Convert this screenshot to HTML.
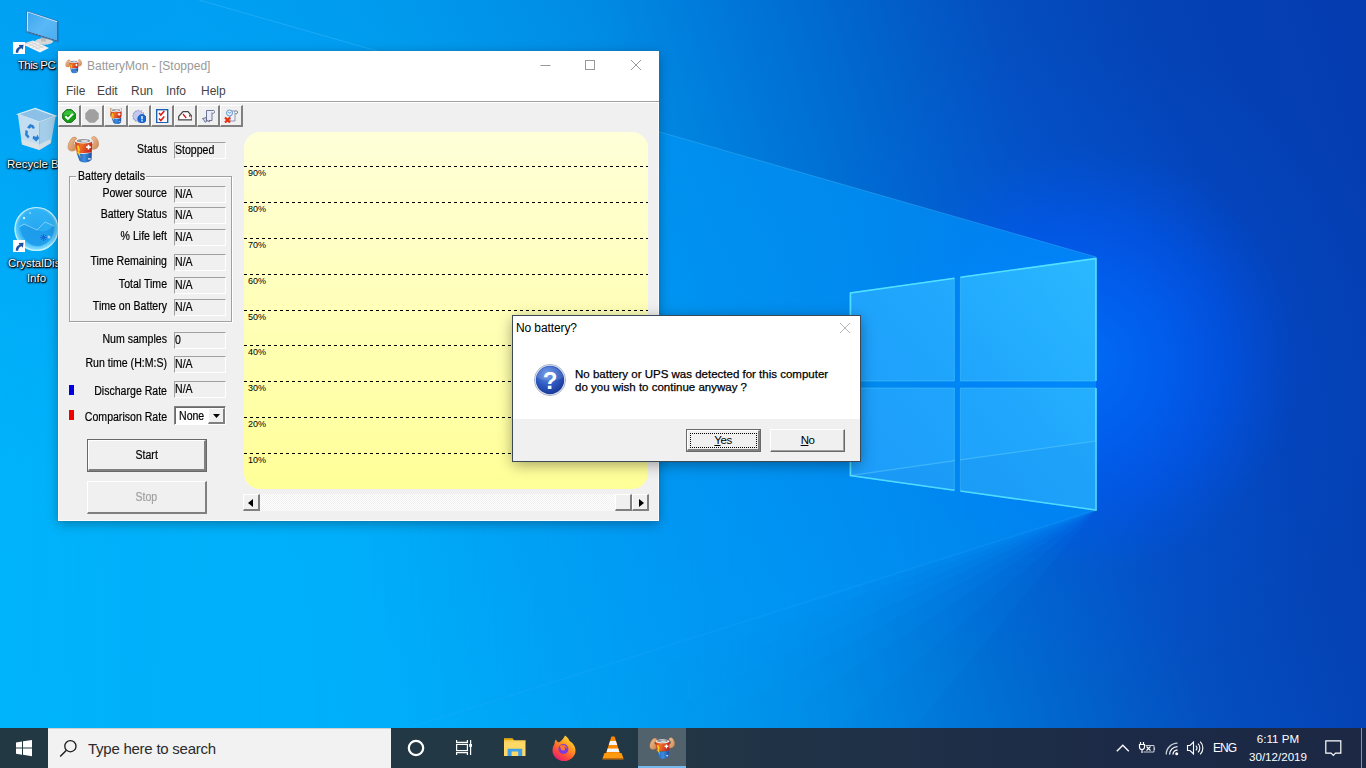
<!DOCTYPE html>
<html lang="en">
<head>
<meta charset="utf-8">
<title>BatteryMon - [Stopped]</title>
<style>
*{box-sizing:border-box;margin:0;padding:0}
html,body{width:1366px;height:768px;overflow:hidden;background:#0a6fd8}
body{position:relative;font-family:"Liberation Sans",sans-serif;font-size:11px;color:#000}
.abs{position:absolute}
#wall{position:absolute;left:0;top:0;width:1366px;height:768px}
/* desktop icons */
.dlabel{position:absolute;color:#fff;font-size:12px;white-space:nowrap;text-shadow:0 1px 2px #000,0 0 3px rgba(0,0,0,.95),1px 1px 1px #000,0 0 1px rgba(0,0,0,.8);letter-spacing:0}
/* main window */
#win{position:absolute;left:58px;top:51px;width:601px;height:470px;background:#f0f0f0;box-shadow:inset 0 0 0 1px rgba(255,255,255,.7),0 0 0 1px rgba(40,120,170,.25),0 3px 11px rgba(0,0,0,.3)}
#titlebar{position:absolute;left:0;top:0;width:601px;height:30px;background:#fff}
#title{position:absolute;left:29px;top:8px;font-size:12px;color:#999;white-space:nowrap}
#menubar{position:absolute;left:0;top:30px;width:601px;height:20px;background:#fff}
#menubar span{position:absolute;top:3px;font-size:12px;color:#444}
#menuline{position:absolute;left:0;top:50px;width:601px;height:1px;background:#a0a0a0;box-shadow:0 1px 0 #fff}
.tb{position:absolute;top:54px;width:23px;height:22px;background:#f0f0f0;border-top:1px solid #fff;border-left:1px solid #fff;border-right:2px solid #808080;border-bottom:2px solid #808080}
.lbl{position:absolute;white-space:nowrap;font-size:12px;line-height:12px;text-align:right;width:110px;transform:scaleX(.88);transform-origin:100% 50%;-webkit-text-stroke:0.2px #000}
.ms{display:inline-block;transform:scaleX(.88);transform-origin:0 50%;white-space:nowrap;-webkit-text-stroke:0.2px currentColor}
.fld{position:absolute;left:116px;width:52px;height:17px;background:#f0f0f0;border-top:1px solid #a0a0a0;border-left:1px solid #a0a0a0;border-right:1px solid #fff;border-bottom:1px solid #fff;font-size:12px;line-height:12px;padding-left:0;padding-top:1px;white-space:nowrap}
.btn{position:absolute;left:29px;width:120px;height:33px;background:#f0f0f0;border-top:1px solid #fff;border-left:1px solid #fff;border-right:2px solid #808080;border-bottom:2px solid #808080;box-shadow:0 0 0 1px #696969;text-align:center;line-height:30px;font-size:12px}
.sb{width:17px;height:17px;background:#f0f0f0;border-top:1px solid #fff;border-left:1px solid #fff;border-right:2px solid #808080;border-bottom:2px solid #808080}
/* dialog */
#dlg{position:absolute;left:513px;top:316px;width:347px;height:145px;background:#fff;box-shadow:0 0 0 1px #3c4a58,0 3px 14px rgba(0,0,0,.4)}
#dlgfoot{position:absolute;left:0;top:103px;width:347px;height:42px;background:#f0f0f0}
.dbtn{position:absolute;top:114px;width:73px;height:21px;background:#f0f0f0;border-top:1px solid #fff;border-left:1px solid #fff;border-right:2px solid #808080;border-bottom:2px solid #808080;box-shadow:0 0 0 1px #9a9a9a;text-align:center;font-size:11.500px;letter-spacing:-0.500px;line-height:18px;text-underline-offset:1px}
/* taskbar */
#taskbar{position:absolute;left:0;top:728px;width:1366px;height:40px;background:linear-gradient(90deg,#223843 0%,#223845 45%,#1f3047 65%,#1c2a47 82%,#1c2844 100%)}
#search{position:absolute;left:48px;top:0;width:343px;height:40px;background:#f2f2f2;border-top:1px solid #cfcfcf}
#search span{position:absolute;left:40px;top:11px;font-size:15px;letter-spacing:-0.25px;color:#2b2b2b;white-space:nowrap}
.tray{position:absolute;color:#fff;font-size:12px;white-space:nowrap}
</style>
</head>
<body>
<svg id="wall" viewBox="0 0 1366 768">
<defs>
<linearGradient id="bg" gradientUnits="userSpaceOnUse" x1="0" y1="768" x2="1464" y2="325">
<stop offset="0" stop-color="#00b5fb"/>
<stop offset="0.26" stop-color="#00b2fa"/>
<stop offset="0.388" stop-color="#00a2f0"/>
<stop offset="0.513" stop-color="#008ce5"/>
<stop offset="0.639" stop-color="#006ed3"/>
<stop offset="0.764" stop-color="#044fc1"/>
<stop offset="0.868" stop-color="#0442b5"/>
<stop offset="1" stop-color="#053cb0"/>
</linearGradient>
<radialGradient id="topdark" gradientUnits="userSpaceOnUse" cx="100" cy="-50" r="520">
<stop offset="0" stop-color="#0050d0" stop-opacity="0.23"/>
<stop offset="0.5" stop-color="#0050d0" stop-opacity="0.11"/>
<stop offset="1" stop-color="#0050d0" stop-opacity="0"/>
</radialGradient>
<linearGradient id="wedge" gradientUnits="userSpaceOnUse" x1="0" y1="0" x2="1100" y2="0">
<stop offset="0" stop-color="#009cff" stop-opacity="0.04"/>
<stop offset="0.36" stop-color="#009cff" stop-opacity="0.15"/>
<stop offset="0.5" stop-color="#009cff" stop-opacity="0.32"/>
<stop offset="0.61" stop-color="#009cff" stop-opacity="0.45"/>
<stop offset="0.76" stop-color="#009cff" stop-opacity="0.6"/>
<stop offset="1" stop-color="#009cff" stop-opacity="0.62"/>
</linearGradient>
<radialGradient id="glow" gradientUnits="userSpaceOnUse" cx="1085" cy="360" r="330">
<stop offset="0" stop-color="#0070ff" stop-opacity="0.85"/>
<stop offset="0.25" stop-color="#0064ff" stop-opacity="0.7"/>
<stop offset="0.42" stop-color="#005cff" stop-opacity="0.5"/>
<stop offset="0.65" stop-color="#0058f8" stop-opacity="0.1"/>
<stop offset="1" stop-color="#0058f8" stop-opacity="0"/>
</radialGradient>
<linearGradient id="pane" gradientUnits="userSpaceOnUse" x1="850" y1="480" x2="1096" y2="270">
<stop offset="0" stop-color="#1c9cf9"/>
<stop offset="0.5" stop-color="#20a6fd"/>
<stop offset="1" stop-color="#2ab8ff"/>
</linearGradient>
</defs>
<rect width="1366" height="768" fill="url(#bg)"/>
<rect width="700" height="500" fill="url(#topdark)"/>
<circle cx="1085" cy="360" r="330" fill="url(#glow)"/>
<mask id="lm" maskUnits="userSpaceOnUse" x="0" y="0" width="1366" height="768">
<polygon points="0,385 1096,385 1096,510 880,768 0,768" fill="#fff" fill-opacity="0.1250"/>
<polygon points="0,385 1096,385 1096,510 790,768 0,768" fill="#fff" fill-opacity="0.1429"/>
<polygon points="0,385 1096,385 1096,510 700,768 0,768" fill="#fff" fill-opacity="0.1667"/>
<polygon points="0,385 1096,385 1096,510 620,768 0,768" fill="#fff" fill-opacity="0.2000"/>
<polygon points="0,385 1096,385 1096,510 540,768 0,768" fill="#fff" fill-opacity="0.2500"/>
<polygon points="0,385 1096,385 1096,510 460,768 0,768" fill="#fff" fill-opacity="0.3333"/>
<polygon points="0,385 1096,385 1096,510 380,768 0,768" fill="#fff" fill-opacity="0.5000"/>
<polygon points="0,385 1096,385 1096,510 300,768 0,768" fill="#fff" fill-opacity="1.0000"/>
</mask>
<polygon points="1096,257 199,0 0,0 0,385 1096,385" fill="url(#wedge)"/>
<rect x="0" y="385" width="1096" height="383" fill="url(#wedge)" mask="url(#lm)"/>
<line x1="1096" y1="510" x2="282" y2="768" stroke="#40b8ff" stroke-opacity="0.12" stroke-width="1.5"/>
<line x1="1096" y1="257" x2="199" y2="0" stroke="#4cc4ff" stroke-opacity="0.35" stroke-width="1"/>
<!-- logo -->
<g stroke="#6adcff" stroke-opacity="0.45" stroke-width="0.8">
<polygon points="850,293 954.400,278.200 954.400,381 850,381" fill="url(#pane)"/>
<polygon points="960.400,277.300 1096,258.500 1096,381 960.400,381" fill="url(#pane)"/>
<polygon points="850,388 954.400,388 954.400,490.300 850,475.600" fill="url(#pane)"/>
<polygon points="960.400,388 1096,388 1096,510 960.400,491" fill="url(#pane)"/>
</g>
<path d="M850.500,381V293L954.400,278.200M960.400,277.300L1096,258.500V381M1096,388V510L960.400,491M954.400,490.300L850.500,475.600V388" fill="none" stroke="#58e6ff" stroke-opacity="0.9" stroke-width="1.600"/>
<polygon points="850,475.600 955,460.700 955,490.400" fill="#0060d0" fill-opacity="0.080"/>
<polygon points="960,459.800 1096,441 1096,510 960,491" fill="#0060d0" fill-opacity="0.080"/>
<path d="M850,475.600L955,460.700M960,459.800L1096,441" stroke="#7fe0ff" stroke-opacity="0.350" stroke-width="1.200" fill="none"/>
</svg>

<svg width="0" height="0" style="position:absolute"><defs>
<linearGradient id="bmr" x1="0" y1="0" x2="1" y2="0.3"><stop offset="0" stop-color="#c8321a"/><stop offset="0.45" stop-color="#f0702a"/><stop offset="1" stop-color="#c42a1c"/></linearGradient>
<linearGradient id="bmb" x1="0" y1="0" x2="1" y2="0"><stop offset="0" stop-color="#1f5fb0"/><stop offset="0.5" stop-color="#3d8be0"/><stop offset="1" stop-color="#1a4f9c"/></linearGradient>
<linearGradient id="bms" x1="0" y1="0" x2="1" y2="1"><stop offset="0" stop-color="#f3c39a"/><stop offset="1" stop-color="#c98550"/></linearGradient>
<symbol id="bm" viewBox="0 0 32 32">
<path d="M8.500 18C5 20 1.200 19 1 15.500C.800 12 2.500 9 4.500 6.500C5.500 5 8.500 4.500 9.500 6C10 7.500 8 8.500 7 10.500C6.500 12 7.500 13 9 13.500z" fill="url(#bms)" stroke="#b9763f" stroke-width="0.500"/>
<path d="M24.500 17C27.500 18 31 16.500 31.500 13C32 10 30.500 7 28.500 5C27.500 4 25 4.500 24.500 6C24.500 7.500 26.500 8 27 10C27 11.500 26 12.500 24.500 12.500z" fill="url(#bms)" stroke="#b9763f" stroke-width="0.500"/>
<path d="M7.800 9.500C8 7 25.200 6.500 25.200 9.200L24.800 20.500L9.800 21.500z" fill="url(#bmr)"/>
<path d="M9.800 21.300C14 22.500 21 22 24.800 20.300L24.600 27.500C22.500 31 14.500 31.500 12.300 28.500z" fill="url(#bmb)"/>
<ellipse cx="16.500" cy="9" rx="8.700" ry="2.500" fill="#f4f4f4"/><ellipse cx="16.500" cy="8.700" rx="6.800" ry="1.700" fill="#8c9296"/><ellipse cx="17.500" cy="8.900" rx="3.500" ry="1" fill="#d8dcde"/>
<path d="M19.200 14.300h1.500v-1.500h1.600v1.500h1.500v1.600h-1.500v1.500h-1.600v-1.500h-1.500z" fill="#fff"/>
<rect x="21" y="26.300" width="2.800" height="1.100" rx=".5" fill="#fff"/>
<path d="M9.800 13.500l2 .3l1.300 5l-1.200-.2l1.800 7.500l-3.600-6.300l1.300.2z" fill="#ffd21e"/>
</symbol></defs></svg>
<!-- desktop icons -->
<svg width="0" height="0" style="position:absolute"><defs><symbol id="sc" viewBox="0 0 12 12"><rect x="0" y="0" width="12" height="12" fill="#fff"/><path d="M2.800 10.800C2.500 7.300 4.300 5.300 6.600 4.700L5.700 2.900L10.600 2.800L9.800 7.700L8.500 6.300C6.700 6.700 5.300 8.300 5.200 10.800z" fill="#1f4fa0"/></symbol></defs></svg>
<svg class="abs" style="left:10px;top:6px" width="54" height="52" viewBox="0 0 54 52">
<defs><linearGradient id="scr" x1="0" y1="0" x2="1" y2="1"><stop offset="0" stop-color="#3ca4ee"/><stop offset="0.5" stop-color="#5ab8f6"/><stop offset="1" stop-color="#48aef2"/></linearGradient></defs>
<ellipse cx="34" cy="35.500" rx="9" ry="3.300" fill="#d4d6d8"/><path d="M31 31l5 1.500v3h-5z" fill="#b8babc"/>
<path d="M17.500 5.700L47.400 15.700V35L17.200 25.600z" fill="url(#scr)" stroke="#e8f4fc" stroke-width="1"/><path d="M47.400 15.700V35L17.200 25.600" fill="none" stroke="#274a7a" stroke-width="0.900"/><path d="M16.700 4.900L48.200 15.200V36L16.400 26.200z" fill="none" stroke="#2a5a94" stroke-opacity="0.700" stroke-width="0.700"/>
<path d="M12 38l11-3.500L39 42l-9 4.500z" fill="#f2f2f2"/><path d="M15 38.200l8.500-2.800M18.500 39.800l8.500-3M22 41.500l9-3.200M25.500 43.200l9-3.500M17 36.800l13 6.500M20.500 35.800l13 6.300" stroke="#c4c6c8" stroke-width="0.600" fill="none"/>
</svg>
<svg class="abs" style="left:13px;top:42px" width="12" height="12"><use href="#sc"/></svg>
<div class="dlabel" style="left:0;top:59px;width:73px;text-align:center;font-size:11.500px;letter-spacing:-0.500px">This PC</div>
<svg class="abs" style="left:14px;top:106px" width="46" height="48" viewBox="0 0 46 48">
<path d="M3.800 8.300L21.200 2.500L41.700 10.100L25.300 16z" fill="#8cc0e6"/><path d="M3.800 8.300L21.200 2.500L41.700 10.100L25.300 16z" fill="none" stroke="#d8ecf8" stroke-width="1.200"/>
<path d="M3.800 8.300L25.300 16L25.500 44L8 38.500z" fill="#c3def0"/><path d="M25.300 16L41.700 10.100L37 37L25.500 44z" fill="#a3cde9"/>
<path d="M8 38.500L25.500 44L37 37L36.400 33L25.400 38.500L7.300 33z" fill="#dfe4e6" fill-opacity="0.800"/>
<g fill="#2b80d6"><path d="M13 21.500l3-3.500l3.500 1.200l1.500 3l-2.500.6l-1-1.800l-2 1.800z"/><path d="M11.500 24l2.500 1l-.5 3l2 2.500l-1.500 2l-3-3.500z"/><path d="M18.500 32.500l.8-2.800l3 1.300l1-2.500l2 3.800l-3 3.200z"/></g>
</svg>
<div class="dlabel" style="left:7px;top:158px;font-size:11.500px">Recycle Bin</div>
<svg class="abs" style="left:13px;top:205px" width="48" height="48" viewBox="0 0 48 48">
<defs><radialGradient id="cb" cx="0.5" cy="0.45" r="0.55"><stop offset="0" stop-color="#27a9f2"/><stop offset="0.7" stop-color="#2fb2f6"/><stop offset="0.92" stop-color="#7fdcff"/><stop offset="1" stop-color="#d6f6ff"/></radialGradient></defs>
<circle cx="23.500" cy="24" r="22" fill="url(#cb)"/><circle cx="23.500" cy="24" r="21.500" fill="none" stroke="#c8f2ff" stroke-width="1.200" stroke-opacity="0.900"/>
<path d="M7 22c6-4 12 0 17 3s12 1 17-5c1 9-4 18-13 21c-10 2-19-6-21-19z" fill="#1593e6" fill-opacity="0.650"/>
<path d="M6 22l5-3l13 6l8-8l9 4" fill="none" stroke="#bfeaff" stroke-width="0.800" stroke-opacity="0.700"/>
<path d="M28 30l5 5m0-5l-5 5m2.500-6v7m-3.500-3.500h7" stroke="#1a66d8" stroke-width="1" fill="none"/>
<circle cx="11" cy="13" r="1.200" fill="#fff" fill-opacity="0.800"/><circle cx="17" cy="8" r="0.800" fill="#fff" fill-opacity="0.800"/><circle cx="36" cy="32" r="1.500" fill="#d8f4ff" fill-opacity="0.700"/>
</svg>
<svg class="abs" style="left:13px;top:240px" width="12" height="12"><use href="#sc"/></svg>
<div class="dlabel" style="left:8px;top:257px;font-size:11.500px">CrystalDisk</div>
<div class="dlabel" style="left:0;top:272px;width:73px;text-align:center;font-size:11.500px">Info</div>
<!-- main window -->
<div id="win">
<div id="titlebar"><svg class="abs" style="left:7px;top:6px" width="17" height="17"><use href="#bm"/></svg><div id="title">BatteryMon - [Stopped]</div></div>
<div id="menubar"><span style="left:8px">File</span><span style="left:39px">Edit</span><span style="left:73px">Run</span><span style="left:108px">Info</span><span style="left:143px">Help</span></div>
<div id="menuline"></div>
<svg class="abs" style="left:9px;top:81px" width="32" height="32"><use href="#bm"/></svg>
<svg class="abs" style="left:470px;top:0" width="131" height="30" viewBox="0 0 131 30">
<path d="M12.5 14.500h10" stroke="#999" stroke-width="1" fill="none"/>
<rect x="57.5" y="9.5" width="9" height="9" stroke="#999" stroke-width="1" fill="none"/>
<path d="M103 9l10 10M113 9l-10 10" stroke="#999" stroke-width="1" fill="none"/>
</svg>
<div class="tb" style="left:0px;width:23px"><svg class="abs" style="left:3px;top:3px" width="14" height="14" viewBox="0 0 14 14"><path d="M4.500 .700h5l3.800 3.800v5l-3.800 3.800h-5L.700 9.500v-5z" fill="#14a014" stroke="#0a6410" stroke-width="1"/><path d="M4.500 1.500h5l3 3v1.500h-11v-1.500z" fill="#4fd04f" fill-opacity="0.600"/><path d="M3.300 7.300l2.600 2.600l4.900-5" fill="none" stroke="#fff" stroke-width="2"/></svg></div>
<div class="tb" style="left:23px;width:23px"><svg class="abs" style="left:3px;top:3px" width="14" height="14" viewBox="0 0 14 14"><path d="M4.300 .300h5.400l4 4v5.400l-4 4H4.300l-4-4V4.300z" fill="#a0a0a0"/></svg></div>
<div class="tb" style="left:46px;width:24px"><svg class="abs" style="left:5px;top:2px" width="12" height="17" viewBox="7.600 5 17.800 27"><use href="#bm" x="0" y="0" width="32" height="32"/></svg></div>
<div class="tb" style="left:70px;width:23px"><svg class="abs" style="left:3px;top:3px" width="14" height="14" viewBox="0 0 14 14"><path d="M6.500 .800l1.200 1.600l1.900-.700l.300 2l2 .300l-.700 1.900l1.600 1.200l-1.600 1.200l.700 1.900l-2 .300l-.300 2l-1.900-.700l-1.200 1.600l-1.200-1.600l-1.900.700l-.300-2l-2-.300l.700-1.900L.200 7.100l1.600-1.200l-.700-1.900l2-.300l.300-2l1.900.700z" fill="#c4c8ee" stroke="#5a64a0" stroke-width="0.700" stroke-dasharray="1 0.800"/><circle cx="10" cy="9.800" r="4.300" fill="#1668d4"/><circle cx="10" cy="9.800" r="4.300" fill="none" stroke="#0c4aa8" stroke-width="0.600"/><rect x="9.300" y="7" width="1.400" height="3.400" fill="#fff"/><rect x="9.300" y="11.200" width="1.400" height="1.300" fill="#fff"/></svg></div>
<div class="tb" style="left:93px;width:23px"><svg class="abs" style="left:3px;top:3px" width="14" height="14" viewBox="0 0 14 14"><rect x="1.700" y=".700" width="11" height="13" fill="#fff" stroke="#1c60b4" stroke-width="1.400"/><path d="M4 4l1.800 2l3.500-4M4 9.500l1.800 2l3.500-4" fill="none" stroke="#d81818" stroke-width="1.500"/></svg></div>
<div class="tb" style="left:116px;width:23px"><svg class="abs" style="left:3px;top:3px" width="14" height="14" viewBox="0 0 14 14"><path d="M.700 10.800V7.500L5 2.700h5l4 4.800v3.300z" fill="#fff" stroke="#444" stroke-width="1.200"/><path d="M8.200 9L5 5" stroke="#d01818" stroke-width="1.300"/><path d="M11.300 6l.900 2.300" stroke="#d01818" stroke-width="1"/></svg></div>
<div class="tb" style="left:139px;width:23px"><svg class="abs" style="left:3px;top:3px" width="14" height="14" viewBox="0 0 14 14"><path d="M5.500 1.500h5.500c1.500 0 1.500 2 0 2v8h-5.500z" fill="#e8eaf8" stroke="#50587a" stroke-width="0.800"/><path d="M1.500 9.500l4-1v3.500c0 1.500-2 1.500-2 0z" fill="#d4d8f0" stroke="#50587a" stroke-width="0.800"/><path d="M11 1.500c2-.500 3 .500 2.500 2c-.500 1-1.500.800-2.500.500" fill="#f4f4fc" stroke="#50587a" stroke-width="0.800"/><path d="M5.500 11.500l3 1.500v-2" fill="#c0c4e0" stroke="#50587a" stroke-width="0.600"/></svg></div>
<div class="tb" style="left:162px;width:23px"><svg class="abs" style="left:3px;top:3px" width="14" height="14" viewBox="0 0 14 14"><path d="M6 2h5v10h-5z" fill="#eef0fa" stroke="#6a7090" stroke-width="0.700"/><circle cx="5.500" cy="4" r="3" fill="#dff0fc" stroke="#5a90c8" stroke-width="0.900"/><path d="M4.500 3l1 1.300l1.200-1.300" fill="none" stroke="#3a70b0" stroke-width="0.700"/><path d="M11 2c2-.500 3 .500 2.500 2c-.500 1-1.500.800-2.500.500" fill="#f4f4fc" stroke="#50587a" stroke-width="0.800"/><path d="M1 8.500l5 5M6 8.500l-5 5" stroke="#e83010" stroke-width="2.200"/></svg></div>
<div class="abs" style="left:11px;top:125px;width:163px;height:146px;border:1px solid #a0a0a0;box-shadow:1px 1px 0 #fff, inset 1px 1px 0 #fff"></div>
<div class="abs" style="left:18px;top:117px;width:70px;height:14px;background:#f0f0f0"></div><div class="abs ms" style="left:20px;top:119px;font-size:12px;line-height:12px">Battery details</div>
<div class="lbl" style="left:-1px;top:92px">Status</div><div class="fld" style="top:91px"><span class="ms">Stopped</span></div>
<div class="lbl" style="left:-1px;top:136px">Power source</div><div class="fld" style="top:135px"><span class="ms">N/A</span></div>
<div class="lbl" style="left:-1px;top:157px">Battery Status</div><div class="fld" style="top:156px"><span class="ms">N/A</span></div>
<div class="lbl" style="left:-1px;top:179px">% Life left</div><div class="fld" style="top:178px"><span class="ms">N/A</span></div>
<div class="lbl" style="left:-1px;top:204px">Time Remaining</div><div class="fld" style="top:203px"><span class="ms">N/A</span></div>
<div class="lbl" style="left:-1px;top:227px">Total Time</div><div class="fld" style="top:226px"><span class="ms">N/A</span></div>
<div class="lbl" style="left:-1px;top:249px">Time on Battery</div><div class="fld" style="top:248px"><span class="ms">N/A</span></div>
<div class="lbl" style="left:-1px;top:282px">Num samples</div><div class="fld" style="top:281px"><span class="ms">0</span></div>
<div class="lbl" style="left:-1px;top:306px">Run time (H:M:S)</div><div class="fld" style="top:305px"><span class="ms">N/A</span></div>
<div class="lbl" style="left:-1px;top:334px">Discharge Rate</div><div class="fld" style="top:330px"><span class="ms">N/A</span></div>
<div class="lbl" style="left:-1px;top:360px">Comparison Rate</div>
<div class="abs" style="left:116px;top:355px;width:52px;height:19px;background:#fff;border-top:1px solid #828282;border-left:1px solid #828282;border-right:1px solid #fff;border-bottom:1px solid #fff;box-shadow:inset 1px 1px 0 #6a6a6a;font-size:12px;line-height:18px;padding-left:4px"><span class="ms">None</span>
<div class="abs" style="left:33px;top:1px;width:17px;height:16px;background:#f0f0f0;border-top:1px solid #fff;border-left:1px solid #fff;border-right:2px solid #808080;border-bottom:2px solid #808080"><svg class="abs" style="left:4px;top:5px" width="7" height="4"><path d="M0 0h7l-3.500 4z" fill="#000"/></svg></div></div>
<div class="abs" style="left:11px;top:334px;width:5px;height:10px;background:#0000e0"></div>
<div class="abs" style="left:11px;top:359px;width:5px;height:10px;background:#f00000"></div>
<div class="btn" style="top:389px;left:30px;width:118px;height:31px;line-height:28px"><span class="ms" style="transform-origin:50% 50%">Start</span></div>
<div class="btn" style="top:430px;color:#a0a0a0;box-shadow:none"><span class="ms" style="transform-origin:50% 50%">Stop</span></div>
<svg class="abs" style="left:186px;top:81px" width="404" height="357" viewBox="0 0 404 357"><defs><linearGradient id="yg" x1="0" y1="0" x2="0" y2="1"><stop offset="0" stop-color="#ffffd9"/><stop offset="1" stop-color="#ffff98"/></linearGradient></defs><rect x="0" y="0" width="404" height="357" rx="16" ry="16" fill="url(#yg)"/><line x1="0" y1="34.5" x2="404" y2="34.5" stroke="#000" stroke-width="1" stroke-dasharray="3 3"/><text x="4" y="44" font-family="Liberation Sans, sans-serif" font-size="9" fill="#000">90%</text><line x1="0" y1="70.5" x2="404" y2="70.5" stroke="#000" stroke-width="1" stroke-dasharray="3 3"/><text x="4" y="80" font-family="Liberation Sans, sans-serif" font-size="9" fill="#000">80%</text><line x1="0" y1="106.5" x2="404" y2="106.5" stroke="#000" stroke-width="1" stroke-dasharray="3 3"/><text x="4" y="116" font-family="Liberation Sans, sans-serif" font-size="9" fill="#000">70%</text><line x1="0" y1="142.5" x2="404" y2="142.5" stroke="#000" stroke-width="1" stroke-dasharray="3 3"/><text x="4" y="152" font-family="Liberation Sans, sans-serif" font-size="9" fill="#000">60%</text><line x1="0" y1="178.5" x2="404" y2="178.5" stroke="#000" stroke-width="1" stroke-dasharray="3 3"/><text x="4" y="188" font-family="Liberation Sans, sans-serif" font-size="9" fill="#000">50%</text><line x1="0" y1="213.5" x2="404" y2="213.5" stroke="#000" stroke-width="1" stroke-dasharray="3 3"/><text x="4" y="223" font-family="Liberation Sans, sans-serif" font-size="9" fill="#000">40%</text><line x1="0" y1="249.5" x2="404" y2="249.5" stroke="#000" stroke-width="1" stroke-dasharray="3 3"/><text x="4" y="259" font-family="Liberation Sans, sans-serif" font-size="9" fill="#000">30%</text><line x1="0" y1="285.5" x2="404" y2="285.5" stroke="#000" stroke-width="1" stroke-dasharray="3 3"/><text x="4" y="295" font-family="Liberation Sans, sans-serif" font-size="9" fill="#000">20%</text><line x1="0" y1="321.5" x2="404" y2="321.5" stroke="#000" stroke-width="1" stroke-dasharray="3 3"/><text x="4" y="331" font-family="Liberation Sans, sans-serif" font-size="9" fill="#000">10%</text></svg>
<div class="abs" style="left:186px;top:443px;width:405px;height:17px;background:#f8f8f8;background-image:conic-gradient(#fff 25%,#f0f0f0 0 50%,#fff 0 75%,#f0f0f0 0);background-size:2px 2px"></div>
<div class="sb abs" style="left:185px;top:443px"><svg class="abs" style="left:4px;top:4px" width="5" height="8"><path d="M5 0v8l-5-4z"/></svg></div>
<div class="sb abs" style="left:557px;top:443px"></div>
<div class="sb abs" style="left:574px;top:443px"><svg class="abs" style="left:6px;top:4px" width="5" height="8"><path d="M0 0v8l5-4z"/></svg></div>
</div>

<!-- dialog -->
<div id="dlg">
<div class="abs" style="left:3px;top:5px;font-size:12px;letter-spacing:-0.1px;white-space:nowrap">No battery?</div>
<svg class="abs" style="left:326px;top:6px" width="12" height="12" viewBox="0 0 12 12"><path d="M1 1l10 10M11 1L1 11" stroke="#b8b8b8" stroke-width="1" fill="none"/></svg>
<svg class="abs" style="left:20px;top:47px" width="34" height="34" viewBox="0 0 34 34">
<defs><radialGradient id="qg" cx="0.4" cy="0.3" r="0.8"><stop offset="0" stop-color="#5f8fe6"/><stop offset="0.55" stop-color="#2a55bd"/><stop offset="1" stop-color="#16318c"/></radialGradient></defs>
<circle cx="17" cy="17" r="15.6" fill="#e8ecf4" stroke="#9aa6bc" stroke-width="0.8"/>
<circle cx="17" cy="17" r="14.2" fill="url(#qg)"/>
<path d="M3.5 14a14 14 0 0 1 27 0c-6 5-20 5-27 0z" fill="#fff" fill-opacity="0.13"/>
<text x="17" y="25.5" text-anchor="middle" font-family="Liberation Sans, sans-serif" font-weight="bold" font-size="24" fill="#fff">?</text>
</svg>
<div class="abs" style="left:62px;top:52px;font-size:11.5px;line-height:13px;white-space:nowrap;-webkit-text-stroke:0.25px #000">No battery or UPS was detected for this computer<br>do you wish to continue anyway ?</div>
<div id="dlgfoot"></div>
<div class="dbtn" style="left:174px;box-shadow:0 0 0 1px #6a6a6a"><u>Y</u>es<div class="abs" style="left:2px;top:2px;width:67px;height:15px;border:1px dotted #000"></div></div>
<div class="dbtn" style="left:257px;top:113px;width:75px;height:23px;line-height:20px;box-shadow:none;border-right:1px solid #696969;border-bottom:1px solid #696969"><div class="abs" style="left:0;top:0;width:73px;height:21px;border-right:1px solid #a0a0a0;border-bottom:1px solid #a0a0a0"></div><u>N</u>o</div>
</div>

<!-- taskbar -->
<div id="taskbar">
<svg class="abs" style="left:15px;top:11px" width="18" height="18" viewBox="0 0 18 18"><path d="M1 3.4L7 2.5V8.6H1zM8 2.35L17 1V8.6H8zM1 9.6H7V15.7L1 14.8zM8 9.6H17V17.2L8 15.85z" fill="#fff"/></svg>
<div id="search"><svg class="abs" style="left:10px;top:9px" width="22" height="22" viewBox="0 0 22 22"><circle cx="12.4" cy="8.2" r="5.6" fill="none" stroke="#1a1a1a" stroke-width="1.3"/><path d="M8.4 12.3L2.2 18.6" stroke="#1a1a1a" stroke-width="1.4" fill="none"/></svg><span>Type here to search</span></div>
<!-- cortana -->
<svg class="abs" style="left:406px;top:10px" width="20" height="20" viewBox="0 0 20 20"><circle cx="10" cy="10" r="7.2" fill="none" stroke="#fff" stroke-width="2.2"/></svg>
<!-- task view -->
<svg class="abs" style="left:454px;top:10px" width="20" height="20" viewBox="0 0 20 20" fill="none" stroke="#fff" stroke-width="1.2">
<path d="M2.6 2v2.4h10.8V2M2.6 17v-2.4h10.8V17"/><rect x="2.6" y="6.4" width="10.8" height="6.2"/><path d="M16.6 2v15"/><rect x="15.2" y="6" width="2.8" height="2.8" fill="#fff" stroke="none"/></svg>
<!-- explorer -->
<svg class="abs" style="left:503px;top:9px" width="24" height="20" viewBox="0 0 24 20">
<path d="M1 1.5h8.5l1.5 2H22.5V19H1z" fill="#ffd866"/><path d="M1 1.5h8.5l1.3 1.8H1z" fill="#e9a800"/>
<path d="M4.6 19v-7.2h14.6V19h-4v-4.4H8.6V19z" fill="#3f9fe8"/><rect x="1" y="3.5" width="21.5" height="1" fill="#f5c84a"/></svg>
<!-- firefox -->
<svg class="abs" style="left:551px;top:7px" width="26" height="26" viewBox="0 0 26 26">
<defs><linearGradient id="ffg" x1="0.8" y1="0.05" x2="0.2" y2="1"><stop offset="0" stop-color="#ffe23a"/><stop offset="0.35" stop-color="#ff9a1f"/><stop offset="0.7" stop-color="#ff4a3a"/><stop offset="1" stop-color="#e3187f"/></linearGradient></defs>
<path d="M14 0.5c3 2 4 4 4.5 5.5c3 1.5 6 5 6 9.5a11.5 10.5 0 0 1-23 0c0-3 1-5 2-6.5c0-2 .5-3.500 1.500-4.500c.5 1.500 1.500 2.500 3 3c1-1 3.500-2 6-7z" fill="url(#ffg)"/>
<circle cx="12.400" cy="14" r="5" fill="#7a3be0"/><path d="M9 10.500c3-1.500 7 0 7.500 3.500c-1-1.500-2.500-2-3.500-1.500c1.500.5 1.500 2.500 0 3c-2 .5-4-1-4-5z" fill="#ff7a2a"/></svg>
<!-- vlc -->
<svg class="abs" style="left:601px;top:7px" width="24" height="26" viewBox="0 0 24 26">
<path d="M10.400 1.500h3.200l5.400 17H5z" fill="#ff8a00"/><path d="M9.100 6h5.800l1.300 4H7.800zM6.700 13.500h10.600l1.100 3.500H5.600z" fill="#f4f4f4"/>
<path d="M3.500 18h17l2 5.500H1.500z" fill="#ff9a10"/><path d="M1.500 23.500h21v1h-21z" fill="#e07000"/></svg>
<!-- batterymon active -->
<svg class="abs" style="left:649px;top:6px;z-index:2" width="26" height="26"><use href="#bm"/></svg>
<div class="abs" style="left:638px;top:0;width:48px;height:40px;background:#52626c"></div>
<div class="abs" style="left:638px;top:38px;width:48px;height:2px;background:#76b9ed"></div>
<!-- tray -->
<svg class="abs" style="left:1115px;top:15px" width="16" height="10" viewBox="0 0 16 10"><path d="M1.800 8.200L7.800 2.200L13.800 8.200" fill="none" stroke="#fff" stroke-width="1.300"/></svg>
<svg class="abs" style="left:1138px;top:13px" width="18" height="14" viewBox="0 0 18 14" fill="none" stroke="#fff" stroke-width="1">
<path d="M2.500 1v2.500M5.500 1v2.500M1.500 3.500h5v2.500a2.500 2.500 0 0 1-5 0zM4 8.500v3.500" stroke-width="1.200"/><path d="M7.500 4.500h8.500v6.500H5.500" stroke="#c8ccd4"/><path d="M16.500 6.500v2.500" stroke="#c8ccd4"/><path d="M8.500 5.500l4 4M12.500 5.500l-4 4" stroke-width="1.100"/></svg>
<svg class="abs" style="left:1165px;top:14px" width="15" height="15" viewBox="0 0 15 15" fill="none" stroke="#fff" stroke-width="1.300">
<path d="M1.200 12.500A11.300 11.300 0 0 1 12.500 1.200" stroke="#cdd2da"/><path d="M4.600 12.500A7.900 7.900 0 0 1 12.500 4.600"/><path d="M8 12.500A4.500 4.500 0 0 1 12.500 8"/><circle cx="11.700" cy="11.800" r="1.500" fill="#fff" stroke="none"/></svg>
<svg class="abs" style="left:1186px;top:12px" width="18" height="16" viewBox="0 0 18 16" fill="none" stroke="#fff" stroke-width="1.100">
<path d="M1.500 5.500h2.500l3.500-3.500v12l-3.500-3.500h-2.500z"/><path d="M9.800 5.600a3.400 3.400 0 0 1 0 4.800M12 3.600a6.200 6.200 0 0 1 0 8.800M14.200 1.600a9 9 0 0 1 0 12.800"/></svg>
<div class="tray" style="left:1213px;top:13px;font-size:12px;letter-spacing:-0.9px">ENG</div>
<div class="tray" style="left:1238px;top:4px;width:80px;text-align:center;font-size:11.600px;line-height:14px">6:11 PM</div>
<div class="tray" style="left:1238px;top:22px;width:80px;text-align:center;font-size:11.600px;line-height:14px">30/12/2019</div>
<svg class="abs" style="left:1324px;top:11px" width="18" height="18" viewBox="0 0 18 18"><path d="M1.800 1.800h15v12.400h-5.300l-2.200 2.200l-2.200-2.200H1.800z" fill="none" stroke="#fff" stroke-width="1.200"/></svg>
<div class="abs" style="left:1361px;top:0;width:1px;height:40px;background:#8392ad"></div>
</div>
</body>
</html>
